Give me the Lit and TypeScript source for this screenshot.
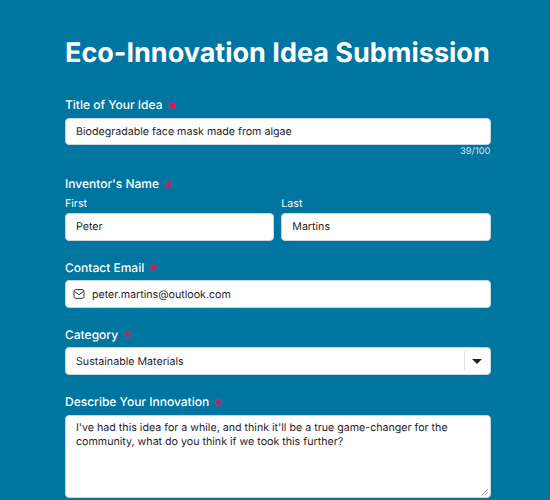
import { LitElement, html, css } from "lit";
import { customElement } from "lit/decorators.js";

@customElement("app-root")
export class AppRoot extends LitElement {
  static styles = css`
    :host { display: block; width: 550px; height: 500px; overflow: hidden; background: #00759f; font-family: Inter, "Liberation Sans", sans-serif; color: #fff; text-rendering: geometricPrecision; }
    .form { padding: 35px 59.5px 0 65px; display: flex; flex-direction: column; }
    h1 { margin: 0 0 27px; font-size: 27px; line-height: 35px; font-weight: 700; white-space: nowrap; }
    .field { display: flex; flex-direction: column; }
    .label { font-size: 12px; line-height: 16px; font-weight: 500; margin-bottom: 4.5px; display: flex; align-items: center; gap: 5px; }
    .req { width: 9px; height: 9px; display: block; }
    .box { box-sizing: border-box; height: 27.67px; background: #fff; border: 1px solid #c4d6e0; border-radius: 4px; color: #1f2328; font-size: 10.67px; display: flex; align-items: center; padding: 0 10px; white-space: nowrap; }
    .count { font-size: 9.33px; line-height: 14px; text-align: right; color: #d5e5ec; }
    .sub { font-size: 10.67px; line-height: 14px; margin-bottom: 2px; }
    .two { display: grid; grid-template-columns: 1fr 1fr; gap: 7px; }
    .col { display: flex; flex-direction: column; }
    .name { margin-top: 17px; }
    .name .label { margin-bottom: 5px; }
    .spaced { margin-top: 19px; }
    .iconbox { padding-left: 7px; }
    .mail { margin-right: 7px; display: block; flex: none; }
    .sel { padding-right: 0; justify-content: space-between; }
    .arrow { height: 20px; width: 25px; border-left: 1px solid #dde3e7; display: flex; align-items: center; justify-content: center; }
    .tri { width: 0; height: 0; border-left: 5px solid transparent; border-right: 5px solid transparent; border-top: 5px solid #1f2328; }
    .area { height: 83.5px; align-items: flex-start; white-space: normal; line-height: 14px; padding: 5px 10px; position: relative; }
    .grip { position: absolute; right: 1px; bottom: 1px; display: block; }
  `;

  req() {
    return html`<svg class="req" viewBox="0 0 10 10"><circle cx="5" cy="5" r="4.8" fill="#5a5f8c" opacity=".7"/><path d="M5 1.8v6.4M2.2 3.4l5.6 3.2M7.8 3.4l-5.6 3.2" stroke="#d3145f" stroke-width="1.6"/></svg>`;
  }

  render() {
    return html`<div class="form">
      <h1>Eco-Innovation Idea Submission</h1>
      <div class="field">
        <div class="label">Title of Your Idea ${this.req()}</div>
        <div class="box">Biodegradable face mask made from algae</div>
        <div class="count">39/100</div>
      </div>
      <div class="field name">
        <div class="label">Inventor's Name ${this.req()}</div>
        <div class="two">
          <div class="col"><div class="sub">First</div><div class="box">Peter</div></div>
          <div class="col"><div class="sub">Last</div><div class="box">Martins</div></div>
        </div>
      </div>
      <div class="field spaced">
        <div class="label">Contact Email ${this.req()}</div>
        <div class="box iconbox">
          <svg class="mail" width="12" height="12" viewBox="0 0 12 12" fill="none" stroke="#1f2328" stroke-width=".9"><rect x="1" y="1.6" width="10" height="8.8" rx="1.8"/><path d="M1.4 3.4 6 6.8l4.6-3.4"/></svg>
          peter.martins@outlook.com
        </div>
      </div>
      <div class="field spaced">
        <div class="label">Category ${this.req()}</div>
        <div class="box sel"><span>Sustainable Materials</span><span class="arrow"><span class="tri"></span></span></div>
      </div>
      <div class="field spaced">
        <div class="label">Describe Your Innovation ${this.req()}</div>
        <div class="box area">I've had this idea for a while, and think it'll be a true game-changer for the community, what do you think if we took this further?
          <svg class="grip" width="8" height="8" viewBox="0 0 8 8" stroke="#8a8f94" stroke-width=".8"><path d="M1 7 7 1M4 7l3-3"/></svg>
        </div>
      </div>
    </div>`;
  }
}
